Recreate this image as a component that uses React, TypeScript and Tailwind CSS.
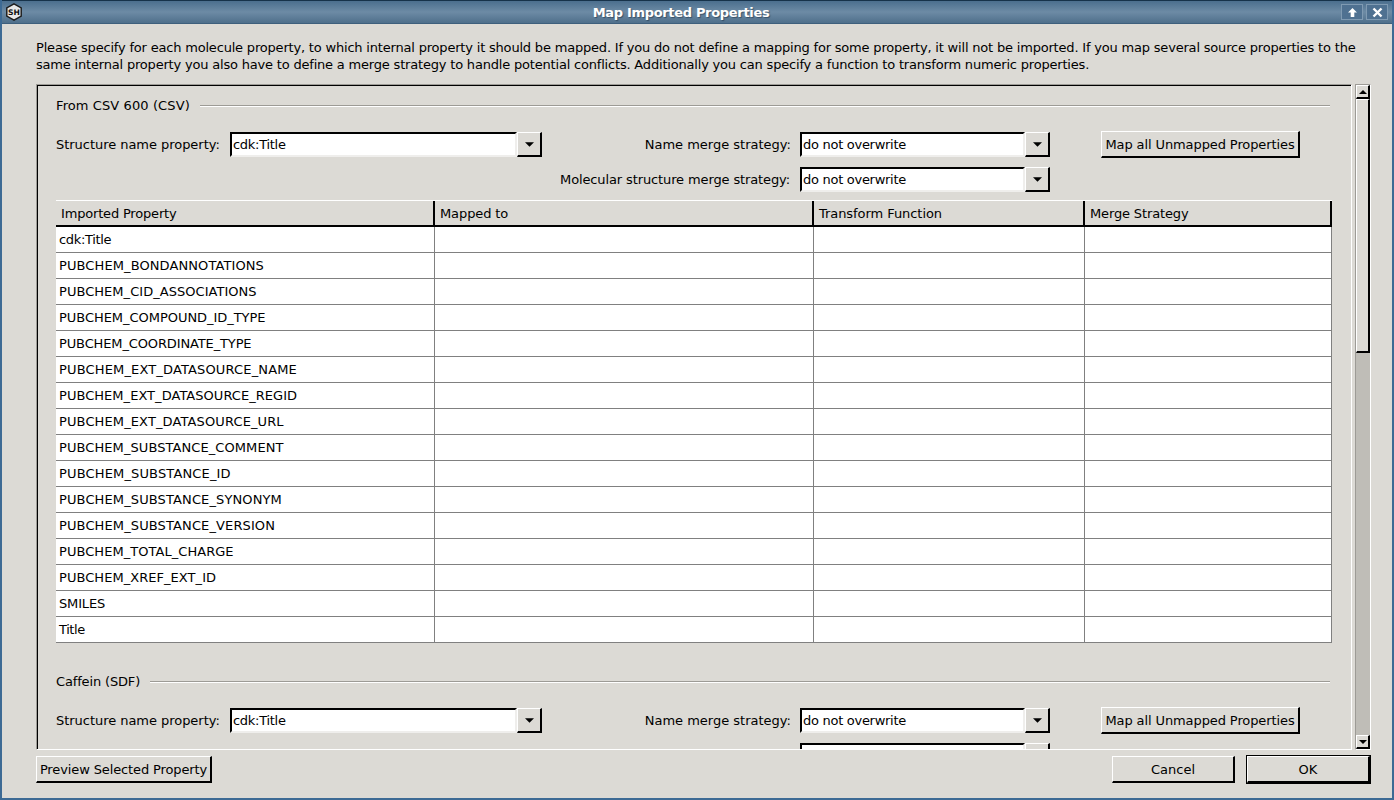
import React from "react";

const rows: [string, string][] = [
  ["cdk:Title", "tracking-[-0.33px]"],
  ["PUBCHEM_BONDANNOTATIONS", "tracking-[0.1px]"],
  ["PUBCHEM_CID_ASSOCIATIONS", "tracking-[0.04px]"],
  ["PUBCHEM_COMPOUND_ID_TYPE", "tracking-[-0.04px]"],
  ["PUBCHEM_COORDINATE_TYPE", "tracking-[-0.13px]"],
  ["PUBCHEM_EXT_DATASOURCE_NAME", "tracking-[0.15px]"],
  ["PUBCHEM_EXT_DATASOURCE_REGID", "tracking-[0.04px]"],
  ["PUBCHEM_EXT_DATASOURCE_URL", "tracking-[0.12px]"],
  ["PUBCHEM_SUBSTANCE_COMMENT", "tracking-[0.08px]"],
  ["PUBCHEM_SUBSTANCE_ID", "tracking-[0.15px]"],
  ["PUBCHEM_SUBSTANCE_SYNONYM", "tracking-[0.12px]"],
  ["PUBCHEM_SUBSTANCE_VERSION", "tracking-[0.12px]"],
  ["PUBCHEM_TOTAL_CHARGE", "tracking-[0.05px]"],
  ["PUBCHEM_XREF_EXT_ID", "tracking-[0.05px]"],
  ["SMILES", "tracking-[-0.15px]"],
  ["Title", "tracking-[-0.4px]"],
];

function Arrow() {
  return (
    <svg width={9} height={5} viewBox="0 0 10 5" className="block">
      <path d="M0 0H10L5 5Z" fill="#000" />
    </svg>
  );
}

function Combo({ value, width }: { value: string; width: string }) {
  return (
    <div className={"flex h-[25px] shrink-0 " + width}>
      <div className="flex-1 min-w-0 bg-white border-t-2 border-l-2 border-t-black border-l-black border-b-2 border-r-2 border-b-[#efeeec] border-r-[#efeeec] pl-[1px] leading-[22px] text-[13px] tracking-[-0.28px]">{value}</div>
      <div className="w-[25px] flex items-center justify-center bg-[#dcdad5] border-t border-l border-white border-b-2 border-r-2 border-b-black border-r-black">
        <Arrow />
      </div>
    </div>
  );
}

function Btn({ children, className = "" }: { children: React.ReactNode; className?: string }) {
  return (
    <div className={"flex items-center justify-center shrink-0 h-[27px] pt-[2px] bg-[#dcdad5] border-t border-l border-white border-b-2 border-r-2 border-b-black border-r-black text-[13px] whitespace-nowrap " + className}>
      {children}
    </div>
  );
}

function Legend({ title, track }: { title: string; track: string }) {
  return (
    <div className="flex items-center h-[16px] text-[13px]">
      <span className={"whitespace-nowrap " + track}>{title}</span>
      <div className="flex-1 ml-[10px] h-[2px] border-t border-t-[#9d9b96] border-b border-b-white" />
    </div>
  );
}

function Controls() {
  return (
    <div className="flex items-center h-[25px] text-[13px]">
      <span className="w-[174px] shrink-0 whitespace-nowrap tracking-[-0.04px]">Structure name property:</span>
      <Combo value="cdk:Title" width="w-[312px]" />
      <span className="w-[258px] shrink-0 text-right pr-[9px] whitespace-nowrap">Name merge strategy:</span>
      <Combo value="do not overwrite" width="w-[250px]" />
      <Btn className="ml-[51px] w-[199px] tracking-[-0.1px]">Map all Unmapped Properties</Btn>
    </div>
  );
}

const raised = "bg-[#dcdad5] border-t border-l border-white border-b-2 border-r-2 border-b-black border-r-black";

function Scrollbar() {
  return (
    <div className="w-[16px] shrink-0 flex flex-col ml-[3px] border-t border-l border-t-[#9d9b96] border-l-[#9d9b96] border-r border-b border-r-white border-b-white">
      <div className={"h-[14px] shrink-0 flex items-center justify-center " + raised}>
        <svg width="8" height="4" viewBox="0 0 10 5"><path d="M0 5H10L5 0Z" fill="#000" /></svg>
      </div>
      <div className={"h-[254px] shrink-0 " + raised} />
      <div className="flex-1 bg-[#bfbdb7]" />
      <div className={"h-[14px] shrink-0 flex items-center justify-center " + raised}>
        <svg width="8" height="4" viewBox="0 0 10 5"><path d="M0 0H10L5 5Z" fill="#000" /></svg>
      </div>
    </div>
  );
}

const cols = ["w-[379px]", "w-[379px]", "w-[271px]", "flex-1"];
const heads: [string, string][] = [
  ["Imported Property", "tracking-[-0.18px]"],
  ["Mapped to", "tracking-[-0.1px]"],
  ["Transform Function", "tracking-[-0.06px]"],
  ["Merge Strategy", "tracking-[-0.14px]"],
];

export default function App() {
  return (
    <div className="w-[1394px] h-[800px] overflow-hidden flex flex-col bg-[#dcdad5] text-black border-[2px] border-t-0 border-[#3d6a94] text-[13px]" style={{ fontFamily: '"DejaVu Sans", sans-serif' }}>
      <div className="h-[24px] shrink-0 flex items-center px-[3px] bg-gradient-to-b from-[#4b6f8e] via-[#6d8ba5] to-[#4f6f8b] border-t border-t-[#16324a] border-b border-b-[#3e5f7c] -mx-[2px]">
        <svg width="18" height="18" viewBox="0 0 20 20" className="ml-[2px] shrink-0">
          <path d="M10 1 18 5.500V14.500L10 19 2 14.500V5.500Z" fill="#e8e8e8" stroke="#1c1c1c" strokeWidth="1.600" />
          <text x="10" y="13.500" textAnchor="middle" fontSize="8.500" fontWeight="700" fill="#111" fontFamily="DejaVu Sans">SH</text>
        </svg>
        <div className="flex-1 text-center text-white font-bold text-[13px] tracking-[-0.32px] pr-[2px] pt-[2px] [text-shadow:1px_1px_1px_rgba(30,50,70,0.6)]">Map Imported Properties</div>
        <div className="flex gap-[3px] mr-[3px]">
          <div className="w-[22px] h-[16px] flex items-center justify-center border border-[#7f9ab2] bg-[#4f7191]">
            <svg width="11" height="11" viewBox="0 0 11 11"><path d="M5.500 1 10 5.500H7.300V10H3.700V5.500H1Z" fill="#fff" /></svg>
          </div>
          <div className="w-[22px] h-[16px] flex items-center justify-center border border-[#7f9ab2] bg-[#4f7191]">
            <svg width="11" height="11" viewBox="0 0 11 11"><path d="M1.500 1.500 9.500 9.500M9.500 1.500 1.500 9.500" stroke="#fff" strokeWidth="2.400" /></svg>
          </div>
        </div>
      </div>

      <div className="flex-1 min-h-0 flex flex-col pl-[34px] pr-[21px]">
        <p className="pt-[15px] h-[60px] shrink-0 leading-[17px] text-[13px] tracking-[-0.19px] w-[1330px]">
          Please specify for each molecule property, to which internal property it should be mapped. If you do not define a mapping for some property, it will not be imported. If you map several source properties to the same internal property you also have to define a merge strategy to handle potential conflicts. Additionally you can specify a function to transform numeric properties.
        </p>

        <div className="h-[666px] shrink-0 flex">
          <div className="flex-1 min-w-0 border-t border-l border-t-[#9d9b96] border-l-[#9d9b96] border-b border-b-white border-r border-r-white">
            <div className="h-full overflow-hidden border-t border-l border-black pl-[18px] pr-[21px] pt-[12px]">
              <Legend title="From CSV 600 (CSV)" track="tracking-[0.1px]" />
              <div className="mt-[18px]"><Controls /></div>
              <div className="flex items-center h-[25px] mt-[10px] pl-[504px]">
                <span className="w-[240px] shrink-0 whitespace-nowrap text-right pr-[10px] tracking-[-0.12px]">Molecular structure merge strategy:</span>
                <Combo value="do not overwrite" width="w-[250px]" />
              </div>
              <div className="mt-[8px] w-[1276px] border-b border-b-[#808080]">
                <div className="flex h-[27px] border-t border-t-white border-b-2 border-b-black">
                  {heads.map(([h, t], i) => (
                    <div key={h} className={cols[i] + " pl-[5px] leading-[25px] border-r-2 border-r-black whitespace-nowrap " + t}>{h}</div>
                  ))}
                </div>
                {rows.map(([r, t], idx) => (
                  <div key={r} className={"flex bg-white " + (idx < rows.length - 1 ? "h-[26px] border-b border-b-[#808080]" : "h-[25px]")}>
                    {cols.map((c, i) => (
                      <div key={i} className={c + " pl-[3px] leading-[25px] whitespace-nowrap border-r border-r-[#808080] " + t}>{i === 0 ? r : ""}</div>
                    ))}
                  </div>
                ))}
              </div>
              <div className="mt-[31px]"><Legend title="Caffein (SDF)" track="tracking-[-0.15px]" /></div>
              <div className="mt-[18px]"><Controls /></div>
              <div className="flex items-center h-[25px] mt-[10px] pl-[744px]">
                <Combo value="" width="w-[250px]" />
              </div>
            </div>
          </div>
          <Scrollbar />
        </div>

        <div className="flex items-center justify-between mt-[5px] h-[29px]">
          <Btn className="w-[176px] tracking-[-0.12px]">Preview Selected Property</Btn>
          <div className="flex items-center gap-[11px]">
            <Btn className="w-[123px]">Cancel</Btn>
            <div className="border border-black">
              <Btn className="w-[123px]">OK</Btn>
            </div>
          </div>
        </div>
      </div>
    </div>
  );
}
